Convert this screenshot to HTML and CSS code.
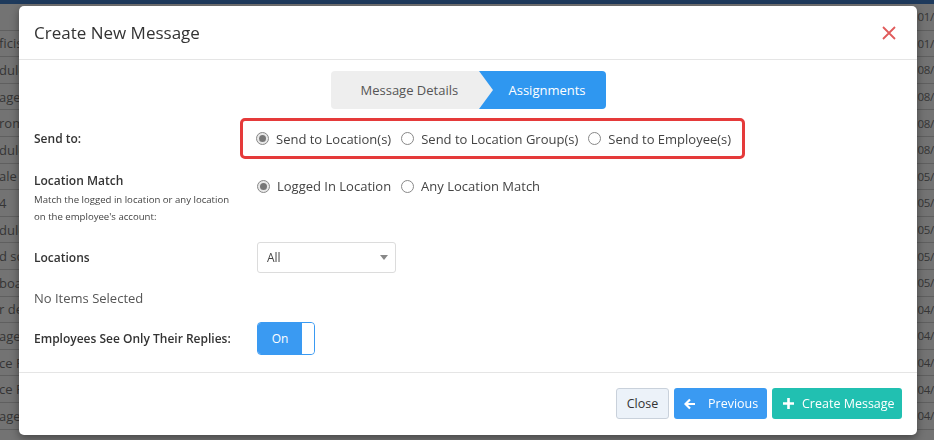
FILE: index.html
```html
<!DOCTYPE html>
<html lang="en">
<head>
    <meta charset="UTF-8">
    <meta name="viewport" content="width=device-width, initial-scale=1.0">
    <title>Create New Message</title>
    <link rel="stylesheet" href="styles.css">
</head>
<body>
    <div class="topbar"></div>
    <div class="page-table">
        <div class="row"><span class="cell-left"></span><span class="cell-right">01/</span></div>
        <div class="row"><span class="cell-left">ficis</span><span class="cell-right">01/</span></div>
        <div class="row"><span class="cell-left">dule</span><span class="cell-right">08/</span></div>
        <div class="row"><span class="cell-left">age</span><span class="cell-right">08/</span></div>
        <div class="row"><span class="cell-left">rom</span><span class="cell-right">08/</span></div>
        <div class="row"><span class="cell-left">dule</span><span class="cell-right">08/</span></div>
        <div class="row"><span class="cell-left">ale m</span><span class="cell-right">05/</span></div>
        <div class="row"><span class="cell-left">4</span><span class="cell-right">05/</span></div>
        <div class="row"><span class="cell-left">dule</span><span class="cell-right">05/</span></div>
        <div class="row"><span class="cell-left">d sc</span><span class="cell-right">05/</span></div>
        <div class="row"><span class="cell-left">boar</span><span class="cell-right">05/</span></div>
        <div class="row"><span class="cell-left">r de</span><span class="cell-right">04/</span></div>
        <div class="row"><span class="cell-left">age</span><span class="cell-right">04/</span></div>
        <div class="row"><span class="cell-left">ce F</span><span class="cell-right">04/</span></div>
        <div class="row"><span class="cell-left">ce F</span><span class="cell-right">04/</span></div>
        <div class="row"><span class="cell-left">age</span><span class="cell-right">04/</span></div>
    </div>

    <div class="modal">
        <div class="modal-header">
            <h3 class="modal-title">Create New Message</h3>
            <span class="modal-close">
                <svg width="14" height="14" viewBox="0 0 14 14"><path d="M1 1 L13 13 M13 1 L1 13" stroke="#e05b5b" stroke-width="1.8" fill="none"/></svg>
            </span>
        </div>

        <div class="modal-body">
            <div class="wizard">
                <div class="step step-done">Message Details</div>
                <div class="step step-active">Assignments</div>
            </div>

            <div class="form-row row-send">
                <label class="form-label">Send to:</label>
                <div class="radio-group highlight">
                    <span class="radio checked"></span><span class="radio-text">Send to Location(s)</span>
                    <span class="radio"></span><span class="radio-text">Send to Location Group(s)</span>
                    <span class="radio"></span><span class="radio-text">Send to Employee(s)</span>
                </div>
            </div>

            <div class="form-row row-match">
                <div class="form-label">
                    Location Match
                    <p class="help-text">Match the logged in location or any location on the employee's account:</p>
                </div>
                <div class="radio-group">
                    <span class="radio checked"></span><span class="radio-text">Logged In Location</span>
                    <span class="radio"></span><span class="radio-text">Any Location Match</span>
                </div>
            </div>

            <div class="form-row row-locations">
                <label class="form-label">Locations</label>
                <div class="select-box">
                    <span>All</span>
                    <span class="caret"></span>
                </div>
            </div>

            <div class="no-items">No Items Selected</div>

            <div class="form-row row-toggle">
                <label class="form-label">Employees See Only Their Replies:</label>
                <div class="toggle">
                    <span class="toggle-on">On</span>
                    <span class="toggle-knob"></span>
                </div>
            </div>
        </div>

        <div class="modal-footer">
            <button class="btn btn-close">Close</button>
            <button class="btn btn-prev">
                <svg width="12" height="12" viewBox="0 0 12 12"><path d="M11 6 H2 M6 1.5 L1.5 6 L6 10.5" stroke="#fff" stroke-width="2.2" fill="none"/></svg>
                <span>Previous</span>
            </button>
            <button class="btn btn-create">
                <svg width="11" height="11" viewBox="0 0 11 11"><path d="M5.5 0 V11 M0 5.5 H11" stroke="#fff" stroke-width="2.6" fill="none"/></svg>
                <span>Create Message</span>
            </button>
        </div>
    </div>
</body>
</html>
```

FILE: styles.css
```css
:root {
    --text-color: #333;
    --muted: #555;
    --blue: #3a9af2;
    --teal: #21c0b1;
    --border-color: #e5e5e5;
    --red: #e53a3a;
}

body {
    margin: 0;
    font-family: 'Open Sans', 'Noto Sans', sans-serif;
    background: #737373;
    color: var(--text-color);
    overflow: hidden;
    height: 440px;
}

.topbar {
    height: 4px;
    background: #1e3a5c;
}

.page-table .row {
    height: 26.6px;
    box-sizing: border-box;
    border-bottom: 1px solid #5f5f5f;
    display: flex;
    align-items: center;
    justify-content: space-between;
    font-size: 13px;
    color: #353535;
}

.cell-left {
    margin-left: -1px;
}

.cell-right {
    font-size: 11.5px;
    letter-spacing: -0.3px;
    white-space: nowrap;
}

/* modal */
.modal {
    position: fixed;
    left: 19px;
    top: 6px;
    width: 898px;
    height: 429px;
    background: #fff;
    border-radius: 5px;
    box-shadow: 0 3px 9px rgba(0, 0, 0, 0.4);
    display: flex;
    flex-direction: column;
}

.modal-header {
    height: 54px;
    box-sizing: border-box;
    border-bottom: 1px solid var(--border-color);
    display: flex;
    align-items: center;
    justify-content: space-between;
    padding: 0 21px 0 15px;
}

.modal-title {
    margin: 0;
    font-size: 17px;
    font-weight: 400;
    color: #333;
}

.modal-close {
    display: flex;
    padding-top: 1px;
}

.modal-body {
    flex: 1;
    padding: 11px 15px 0;
}

/* wizard */
.wizard {
    display: flex;
    justify-content: center;
    height: 38px;
}

.step {
    display: flex;
    align-items: center;
    font-size: 13px;
    position: relative;
}

.step-done {
    background: #eeeeee;
    color: #555;
    width: 148px;
    padding-left: 30px;
    box-sizing: border-box;
    border-radius: 4px 0 0 4px;
}

.step-done::after {
    content: "";
    position: absolute;
    right: -14px;
    top: 0;
    border-top: 19px solid transparent;
    border-bottom: 19px solid transparent;
    border-left: 14px solid #eeeeee;
    z-index: 1;
}

.step-active {
    background: #2f97f0;
    color: #fff;
    width: 127px;
    padding-left: 30px;
    box-sizing: border-box;
    border-radius: 0 4px 4px 0;
}

/* form */
.form-row {
    display: grid;
    grid-template-columns: 223px 1fr;
    align-items: center;
}

.form-label {
    font-size: 12px;
    font-weight: 600;
    color: #333;
}

.row-send {
    margin-top: 9px;
}

.radio-group {
    display: flex;
    align-items: center;
    font-size: 13px;
    color: #444;
}

.radio-group.highlight {
    margin-left: -17px;
    width: 505px;
    height: 41px;
    box-sizing: border-box;
    border: 3px solid var(--red);
    border-radius: 5px;
    padding-left: 13px;
}

.radio {
    width: 13px;
    height: 13px;
    border: 1px solid #888;
    border-radius: 50%;
    box-sizing: border-box;
    position: relative;
    margin-right: 7px;
    flex-shrink: 0;
    background: #fff;
}

.radio.checked {
    background: #e8e8e8;
}

.radio.checked::after {
    content: "";
    position: absolute;
    left: 2px;
    top: 2px;
    width: 7px;
    height: 7px;
    border-radius: 50%;
    background: #777;
}

.radio-text {
    margin-right: 10px;
}

.row-match {
    margin-top: 13px;
    align-items: start;
}

.row-match .radio-group {
    margin-top: 5px;
}

.help-text {
    font-size: 9.6px;
    font-weight: 400;
    color: #444;
    line-height: 17px;
    margin: 2px 0 0;
    width: 205px;
}

.row-locations {
    margin-top: 17px;
}

.select-box {
    width: 139px;
    height: 31px;
    box-sizing: border-box;
    border: 1px solid #dcdcdc;
    border-radius: 3px;
    display: flex;
    align-items: center;
    justify-content: space-between;
    padding: 0 7px 0 9px;
    font-size: 12px;
    color: #444;
}

.caret {
    border-left: 4px solid transparent;
    border-right: 4px solid transparent;
    border-top: 5px solid #888;
}

.no-items {
    font-size: 13px;
    color: #555;
    margin-top: 16px;
}

.row-toggle {
    margin-top: 15px;
}

.toggle {
    width: 58px;
    height: 33px;
    display: flex;
    border-radius: 4px;
    overflow: hidden;
    border: 1px solid #3a9af2;
    box-sizing: border-box;
}

.toggle-on {
    flex: 1;
    background: var(--blue);
    color: #fff;
    font-size: 12px;
    display: flex;
    align-items: center;
    justify-content: center;
}

.toggle-knob {
    width: 12px;
    background: #fff;
    border-radius: 3px;
}

/* footer */
.modal-footer {
    height: 63px;
    box-sizing: border-box;
    border-top: 1px solid var(--border-color);
    display: flex;
    justify-content: flex-end;
    align-items: flex-start;
    padding: 15px 15px 0;
    gap: 5px;
}

.btn {
    height: 31px;
    border: none;
    border-radius: 3px;
    font-family: inherit;
    font-size: 12.5px;
    display: flex;
    align-items: center;
    padding: 0 10px;
    white-space: nowrap;
    box-sizing: border-box;
    cursor: pointer;
}

.btn svg {
    flex-shrink: 0;
}

.btn-close {
    background: #ecf2f9;
    border: 1px solid #c9d1db;
    color: #333;
    width: 53px;
    justify-content: center;
}

.btn-prev {
    background: var(--blue);
    color: #fff;
    width: 93px;
    padding-left: 10px;
    gap: 12px;
}

.btn-create {
    background: var(--teal);
    color: #fff;
    width: 130px;
    padding-left: 11px;
    gap: 8px;
}
```
